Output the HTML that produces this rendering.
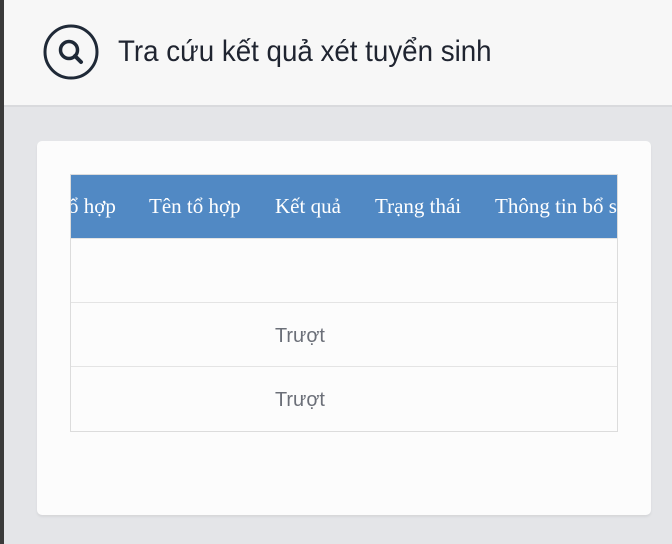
<!DOCTYPE html>
<html><head><meta charset="utf-8"><style>
*{margin:0;padding:0;box-sizing:border-box}
body{width:672px;height:544px;overflow:hidden;background:#e4e5e8;font-family:"Liberation Sans",sans-serif;position:relative}
.strip{position:absolute;left:0;top:0;width:4px;height:544px;background:#3a3a3a}
.hdr{position:absolute;left:4px;top:0;width:668px;height:107px;background:#f7f7f7;border-bottom:2px solid #d9dadd}
.title{position:absolute;left:114px;top:35px;font-size:29.5px;color:#1f2430;white-space:nowrap;transform:scaleX(0.94);transform-origin:0 0}
.card{position:absolute;left:37px;top:141px;width:614px;height:374px;background:#fcfcfc;border-radius:5px;box-shadow:0 2px 2px #d6d7da}
.tbl{position:absolute;left:70px;top:174px;width:548px;height:258px;border:1px solid #dcdcdc;background:#fcfcfc;overflow:hidden}
.th{position:absolute;left:0;top:0;width:548px;height:63px;background:#5189c4}
.th span{position:absolute;top:19px;font-family:"Liberation Serif",serif;font-size:21px;color:#fff;white-space:nowrap}
.row{position:absolute;left:0;width:548px;height:64px;border-top:1px solid #e4e4e4}
.row span{position:absolute;left:204px;top:21px;font-size:20.5px;color:#6b6f78;transform:scaleX(0.97);transform-origin:0 0}
</style></head><body>
<div class="strip"></div>
<div class="hdr">
<svg style="position:absolute;left:38px;top:24px" width="60" height="60" viewBox="0 0 60 60"><circle cx="29" cy="28" r="26" fill="none" stroke="#1f2937" stroke-width="3"/><circle cx="27" cy="26" r="8.5" fill="none" stroke="#1f2937" stroke-width="3.5"/><line x1="33" y1="32" x2="39" y2="38" stroke="#1f2937" stroke-width="4" stroke-linecap="round"/></svg>
<div class="title">Tra cứu kết quả xét tuyển sinh</div>
</div>
<div class="card"></div>
<div class="tbl">
<div class="th"><span style="left:-3px">ổ hợp</span><span style="left:78px">Tên tổ hợp</span><span style="left:204px">Kết quả</span><span style="left:304px">Trạng thái</span><span style="left:424px">Thông tin bổ sung</span></div>
<div class="row" style="top:63px"></div>
<div class="row" style="top:127px"><span>Trượt</span></div>
<div class="row" style="top:191px"><span>Trượt</span></div>
</div>
</body></html>
